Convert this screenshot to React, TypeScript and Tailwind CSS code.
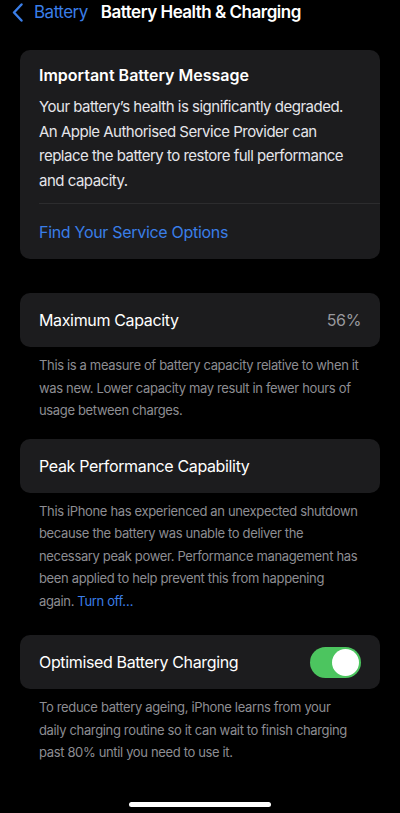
import React from "react";

const font = { fontFamily: "Inter, 'Noto Sans', sans-serif" };

function Card({ children }: { children: React.ReactNode }) {
  return <div className="mx-5 rounded-[10px] bg-[#1c1c1e]">{children}</div>;
}

function Footer({ lines }: { lines: React.ReactNode[] }) {
  return (
    <p className="ml-[39px] mr-[24px] mt-[7px] text-[13px] leading-[22.5px] text-[#8d8d92] tracking-[-0.35px]">
      {lines.map((line, i) => (
        <span key={i} className="block whitespace-nowrap">
          {line}
        </span>
      ))}
    </p>
  );
}

export default function App() {
  return (
    <div className="min-h-[813px] w-[400px] bg-black text-white" style={font}>
      <div className="flex h-[25px] items-center">
        <div className="flex items-center pl-[12px]">
          <svg width="11" height="19" viewBox="0 0 11 19" fill="none">
            <path d="M9.5 1.5 L2 9.5 L9.5 17.5" stroke="#3a7ee8" strokeWidth="2.4" strokeLinecap="round" strokeLinejoin="round" />
          </svg>
          <span className="ml-[11px] text-[17px] tracking-[-0.5px] text-[#3a7ee8]">Battery</span>
        </div>
        <span className="ml-[13px] text-[17px] font-semibold tracking-[-0.5px]">Battery Health &amp; Charging</span>
      </div>

      <div className="mt-[25px]">
        <Card>
          <div className="px-[19px] pt-[13px] pb-[10px]">
            <div className="text-[16px] font-semibold leading-[24px]">Important Battery Message</div>
            <p className="mt-[8px] text-[15px] leading-[24.5px] tracking-[-0.5px] text-[#e5e5ea]">
              Your battery’s health is significantly degraded. An Apple Authorised Service Provider can replace the
              battery to restore full performance and capacity.
            </p>
          </div>
          <div className="ml-[19px] h-px bg-[#2c2c2e]" />
          <div className="flex h-[55px] items-center px-[19px] text-[16px] tracking-[-0.3px] text-[#3a7ee8]">
            Find Your Service Options
          </div>
        </Card>
      </div>

      <div className="mt-[34px]">
        <Card>
          <div className="flex h-[54px] items-center justify-between px-[19px] text-[16px] tracking-[-0.35px]">
            <span>Maximum Capacity</span>
            <span className="text-[#98989d]">56%</span>
          </div>
        </Card>
        <Footer
          lines={[
            "This is a measure of battery capacity relative to when it",
            "was new. Lower capacity may result in fewer hours of",
            "usage between charges.",
          ]}
        />
      </div>

      <div className="mt-[17px]">
        <Card>
          <div className="flex h-[54px] items-center px-[19px] text-[16px] tracking-[-0.35px]">Peak Performance Capability</div>
        </Card>
        <Footer
          lines={[
            "This iPhone has experienced an unexpected shutdown",
            "because the battery was unable to deliver the",
            "necessary peak power. Performance management has",
            "been applied to help prevent this from happening",
            <>
              again. <span className="text-[#3a7ee8]">Turn off…</span>
            </>,
          ]}
        />
      </div>

      <div className="mt-[23px]">
        <Card>
          <div className="flex h-[54px] items-center justify-between px-[19px] text-[16px] tracking-[-0.35px]">
            <span>Optimised Battery Charging</span>
            <div className="flex h-[31px] w-[51px] items-center justify-end rounded-full bg-[#4cc55f] pr-[2px]">
              <div className="h-[27px] w-[27px] rounded-full bg-white" />
            </div>
          </div>
        </Card>
        <Footer
          lines={[
            "To reduce battery ageing, iPhone learns from your",
            "daily charging routine so it can wait to finish charging",
            "past 80% until you need to use it.",
          ]}
        />
      </div>

      <div className="mt-[38px] flex justify-center">
        <div className="h-[5px] w-[142px] rounded-full bg-white" />
      </div>
    </div>
  );
}
